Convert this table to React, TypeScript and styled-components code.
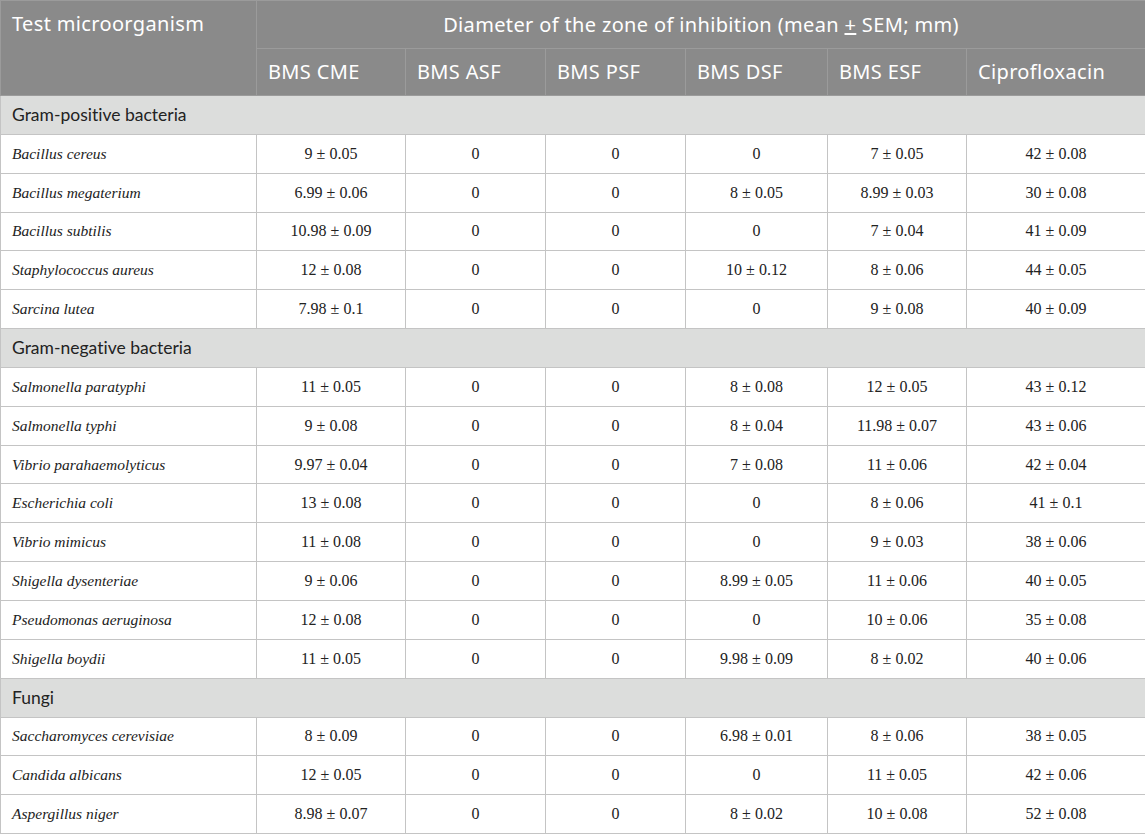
import React from "react";
import styled, { createGlobalStyle } from "styled-components";

const Global = createGlobalStyle`
  html, body { margin: 0; padding: 0; background: #ffffff; }
  body { font-family: "Noto Sans", "Open Sans", sans-serif; }
`;

const Table = styled.table`
  width: 1145px;
  table-layout: fixed;
  border-collapse: collapse;
  font-family: "Noto Sans", "Open Sans", sans-serif;
`;

const HeadCell = styled.th<{ $top?: boolean; $center?: boolean }>`
  background: #8a8a8a;
  color: #ffffff;
  font-weight: 400;
  font-size: 20px;
  letter-spacing: 0.35px;
  text-align: ${(p) => (p.$center ? "center" : "left")};
  vertical-align: ${(p) => (p.$top ? "top" : "middle")};
  padding: ${(p) => (p.$top ? "9px 11px 0" : "0 11px")};
  height: 47.5px;
  border: 1px solid #9b9b9b;
  box-sizing: border-box;
  white-space: nowrap;
`;

const GroupCell = styled.td`
  background: #dcdddc;
  color: #222222;
  font-family: Lato, "Noto Sans", sans-serif;
  font-size: 17.5px;
  font-variant-ligatures: none;
  padding: 0 11px;
  height: 38.85px;
  border: 1px solid #c4c4c4;
  box-sizing: border-box;
`;

const NameCell = styled.td`
  font-family: "Liberation Serif", "Times New Roman", serif;
  font-style: italic;
  font-size: 15.5px;
  color: #222222;
  padding: 0 11px;
  height: 38.85px;
  border: 1px solid #c4c4c4;
  box-sizing: border-box;
`;

const ValueCell = styled.td`
  font-family: "Liberation Serif", "Times New Roman", serif;
  font-size: 16px;
  color: #222222;
  text-align: center;
  height: 38.85px;
  border: 1px solid #c4c4c4;
  box-sizing: border-box;
`;

const Under = styled.span`
  text-decoration: underline;
`;

type Row = [string, string, string, string, string, string, string];
type Group = { title: string; rows: Row[] };

const groups: Group[] = [
  {
    title: "Gram-positive bacteria",
    rows: [
      ["Bacillus cereus", "9 ± 0.05", "0", "0", "0", "7 ± 0.05", "42 ± 0.08"],
      ["Bacillus megaterium", "6.99 ± 0.06", "0", "0", "8 ± 0.05", "8.99 ± 0.03", "30 ± 0.08"],
      ["Bacillus subtilis", "10.98 ± 0.09", "0", "0", "0", "7 ± 0.04", "41 ± 0.09"],
      ["Staphylococcus aureus", "12 ± 0.08", "0", "0", "10 ± 0.12", "8 ± 0.06", "44 ± 0.05"],
      ["Sarcina lutea", "7.98 ± 0.1", "0", "0", "0", "9 ± 0.08", "40 ± 0.09"],
    ],
  },
  {
    title: "Gram-negative bacteria",
    rows: [
      ["Salmonella paratyphi", "11 ± 0.05", "0", "0", "8 ± 0.08", "12 ± 0.05", "43 ± 0.12"],
      ["Salmonella typhi", "9 ± 0.08", "0", "0", "8 ± 0.04", "11.98 ± 0.07", "43 ± 0.06"],
      ["Vibrio parahaemolyticus", "9.97 ± 0.04", "0", "0", "7 ± 0.08", "11 ± 0.06", "42 ± 0.04"],
      ["Escherichia coli", "13 ± 0.08", "0", "0", "0", "8 ± 0.06", "41 ± 0.1"],
      ["Vibrio mimicus", "11 ± 0.08", "0", "0", "0", "9 ± 0.03", "38 ± 0.06"],
      ["Shigella dysenteriae", "9 ± 0.06", "0", "0", "8.99 ± 0.05", "11 ± 0.06", "40 ± 0.05"],
      ["Pseudomonas aeruginosa", "12 ± 0.08", "0", "0", "0", "10 ± 0.06", "35 ± 0.08"],
      ["Shigella boydii", "11 ± 0.05", "0", "0", "9.98 ± 0.09", "8 ± 0.02", "40 ± 0.06"],
    ],
  },
  {
    title: "Fungi",
    rows: [
      ["Saccharomyces cerevisiae", "8 ± 0.09", "0", "0", "6.98 ± 0.01", "8 ± 0.06", "38 ± 0.05"],
      ["Candida albicans", "12 ± 0.05", "0", "0", "0", "11 ± 0.05", "42 ± 0.06"],
      ["Aspergillus niger", "8.98 ± 0.07", "0", "0", "8 ± 0.02", "10 ± 0.08", "52 ± 0.08"],
    ],
  },
];

const colWidths = [256, 149, 140, 140, 142, 139, 179];
const subHeads = ["BMS CME", "BMS ASF", "BMS PSF", "BMS DSF", "BMS ESF", "Ciprofloxacin"];

export default function App() {
  return (
    <>
      <Global />
      <Table>
        <colgroup>
          {colWidths.map((w, i) => (
            <col key={i} style={{ width: w }} />
          ))}
        </colgroup>
        <thead>
          <tr>
            <HeadCell rowSpan={2} $top>
              Test microorganism
            </HeadCell>
            <HeadCell colSpan={6} $center>
              Diameter of the zone of inhibition (mean <Under>+</Under> SEM; mm)
            </HeadCell>
          </tr>
          <tr>
            {subHeads.map((h) => (
              <HeadCell key={h}>{h}</HeadCell>
            ))}
          </tr>
        </thead>
        <tbody>
          {groups.map((g) => (
            <React.Fragment key={g.title}>
              <tr>
                <GroupCell colSpan={7}>{g.title}</GroupCell>
              </tr>
              {g.rows.map((r) => (
                <tr key={r[0]}>
                  <NameCell>{r[0]}</NameCell>
                  {r.slice(1).map((v, i) => (
                    <ValueCell key={i}>{v}</ValueCell>
                  ))}
                </tr>
              ))}
            </React.Fragment>
          ))}
        </tbody>
      </Table>
    </>
  );
}
